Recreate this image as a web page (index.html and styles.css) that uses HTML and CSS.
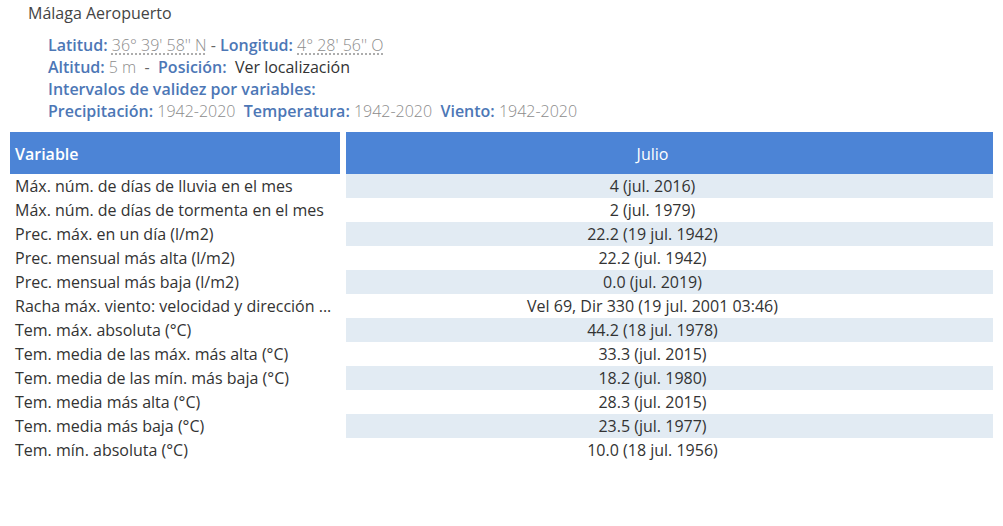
FILE: index.html
```html
<!DOCTYPE html>
<html lang="es">
<head>
<meta charset="utf-8">
<title>Málaga Aeropuerto</title>
<link rel="stylesheet" href="styles.css">
</head>
<body>
<div class="page">
  <h1 class="station">Málaga Aeropuerto</h1>
  <div class="info">
    <div class="line"><span class="lbl">Latitud:</span> <span class="val dotted">36° 39' 58'' N</span> - <span class="lbl">Longitud:</span> <span class="val dotted">4° 28' 56'' O</span></div>
    <div class="line"><span class="lbl">Altitud:</span> <span class="val">5 m</span> &nbsp;- &nbsp;<span class="lbl">Posición:</span> &nbsp;<span class="link">Ver localización</span></div>
    <div class="line"><span class="lbl">Intervalos de validez por variables:</span></div>
    <div class="line"><span class="lbl">Precipitación:</span> <span class="val">1942-2020</span> &nbsp;<span class="lbl">Temperatura:</span> <span class="val">1942-2020</span> &nbsp;<span class="lbl">Viento:</span> <span class="val">1942-2020</span></div>
  </div>
  <div class="table">
    <div class="th th-var">Variable</div>
    <div class="th th-month">Julio</div>

    <div class="td var">Máx. núm. de días de lluvia en el mes</div>
    <div class="td num shade">4 (jul. 2016)</div>
    <div class="td var">Máx. núm. de días de tormenta en el mes</div>
    <div class="td num">2 (jul. 1979)</div>
    <div class="td var">Prec. máx. en un día (l/m2)</div>
    <div class="td num shade">22.2 (19 jul. 1942)</div>
    <div class="td var">Prec. mensual más alta (l/m2)</div>
    <div class="td num">22.2 (jul. 1942)</div>
    <div class="td var">Prec. mensual más baja (l/m2)</div>
    <div class="td num shade">0.0 (jul. 2019)</div>
    <div class="td var">Racha máx. viento: velocidad y dirección ...</div>
    <div class="td num">Vel 69, Dir 330 (19 jul. 2001 03:46)</div>
    <div class="td var">Tem. máx. absoluta (°C)</div>
    <div class="td num shade">44.2 (18 jul. 1978)</div>
    <div class="td var">Tem. media de las máx. más alta (°C)</div>
    <div class="td num">33.3 (jul. 2015)</div>
    <div class="td var">Tem. media de las mín. más baja (°C)</div>
    <div class="td num shade">18.2 (jul. 1980)</div>
    <div class="td var">Tem. media más alta (°C)</div>
    <div class="td num">28.3 (jul. 2015)</div>
    <div class="td var">Tem. media más baja (°C)</div>
    <div class="td num shade">23.5 (jul. 1977)</div>
    <div class="td var">Tem. mín. absoluta (°C)</div>
    <div class="td num">10.0 (18 jul. 1956)</div>
  </div>
</div>
</body>
</html>
```
FILE: styles.css
```css
html, body {
  margin: 0;
  padding: 0;
  background: #ffffff;
}
body {
  font-family: "Open Sans", "Liberation Sans", sans-serif;
  font-size: 16px;
  color: #333333;
}
.page {
  padding: 0 10px;
}
.station {
  margin: 0;
  padding: 2px 0 0 18px;
  font-size: 16px;
  font-weight: normal;
  line-height: 22px;
  color: #444444;
}
.info {
  padding: 10px 0 0 38px;
}
.line {
  line-height: 22px;
  color: #666666;
}
.lbl {
  font-weight: 600;
  color: #4d77b6;
}
.val {
  font-weight: 300;
  color: #8c8c8c;
}
.dotted {
  text-decoration: underline dotted #999999;
  text-underline-offset: 3px;
}
.link {
  color: #333333;
}
.table {
  margin-top: 10px;
  width: 983px;
  display: grid;
  grid-template-columns: 330px 1fr;
  column-gap: 6px;
}
.th {
  background: #4c84d6;
  color: #ffffff;
  height: 42px;
  display: flex;
  align-items: center;
  padding-top: 1px;
  box-sizing: border-box;
}
.th-var {
  font-weight: 600;
  padding-left: 5px;
}
.th-month {
  justify-content: center;
  padding-right: 34px;
}
.td {
  height: 24px;
  line-height: 24px;
  white-space: nowrap;
  overflow: hidden;
}
.var {
  padding-left: 5px;
}
.num {
  text-align: center;
  padding-right: 34px;
}
.shade {
  background: #e2ebf3;
}
```
